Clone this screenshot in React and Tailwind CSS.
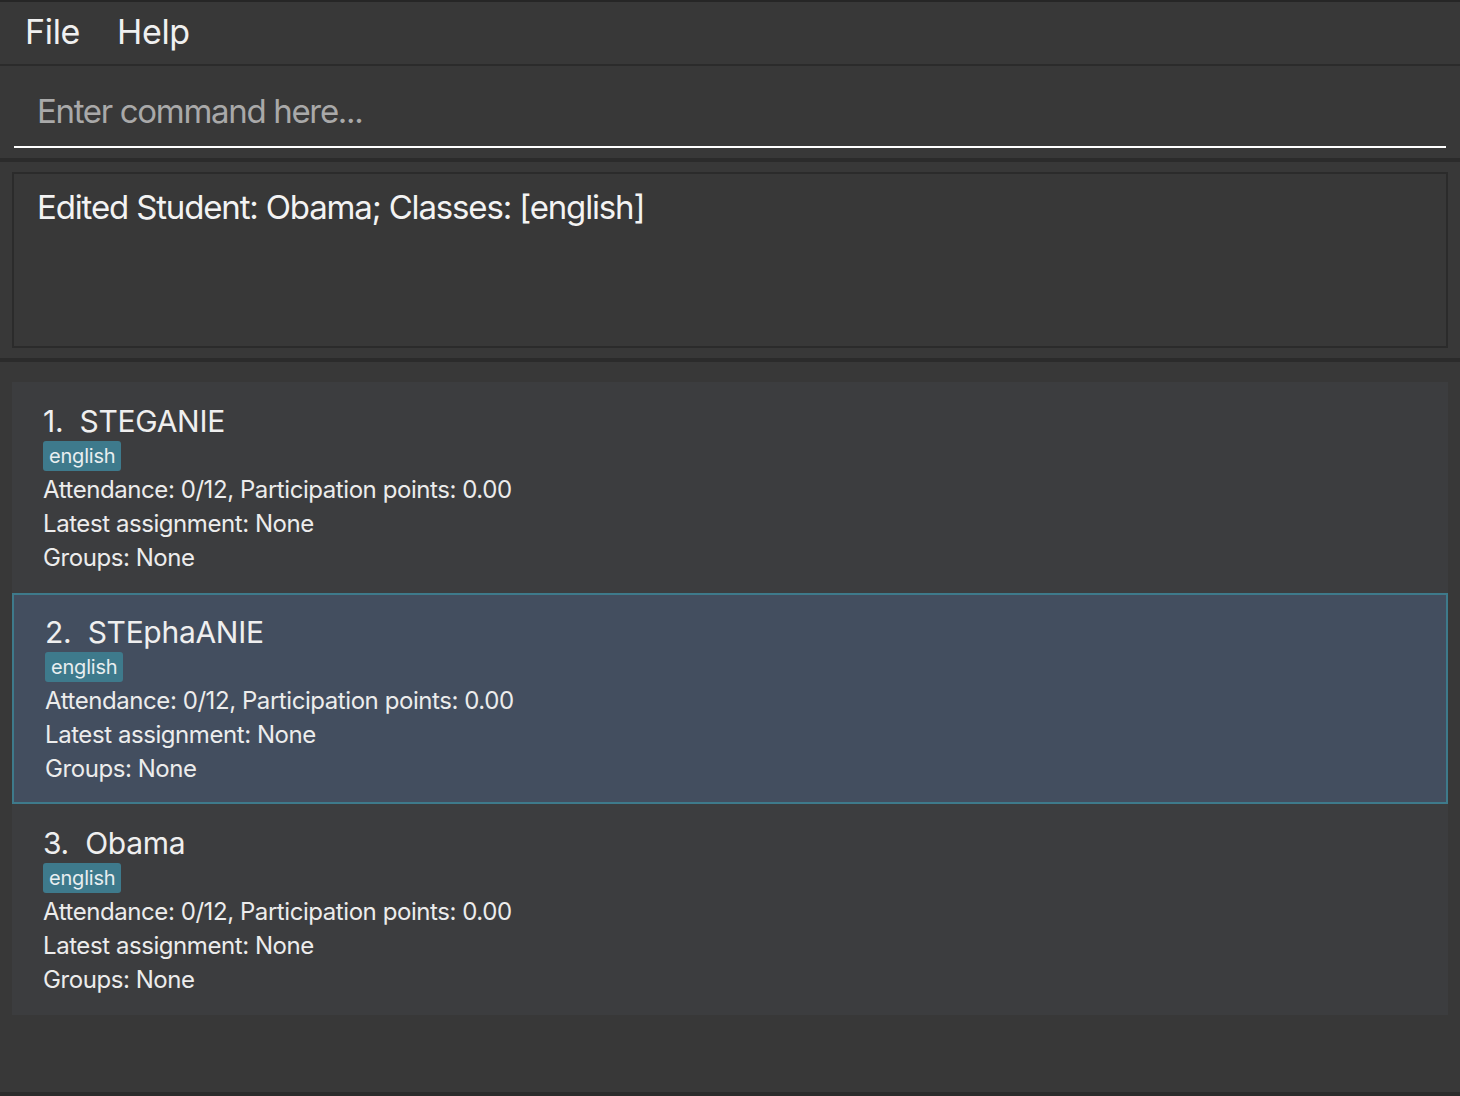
import React from 'react';

const students = [
  { id: 1, name: 'STEGANIE', tag: 'english' },
  { id: 2, name: 'STEphaANIE', tag: 'english', selected: true },
  { id: 3, name: 'Obama', tag: 'english' },
];

const StudentCard = ({ student }) => {
  const box = student.selected
    ? 'bg-[#434e5f] border-2 border-[#3e7a8b] pl-[31px]'
    : 'border-2 border-transparent pl-[29px]';
  return (
    <div className={`h-[211px] pt-[18px] ${box}`}>
      <div className="text-[30px] leading-[38px] text-[#efefef] tracking-[-0.01em]">
        {student.id}.&nbsp; {student.name}
      </div>
      <div className="mt-[1px] mb-[2px] flex">
        <span className="bg-[#3e7a8c] text-[#e8eef0] text-[20px] leading-[30px] px-[6px] rounded-[3px] tracking-[-0.01em]">
          {student.tag}
        </span>
      </div>
      <div className="text-[24px] leading-[34px] text-[#ececec] tracking-[-0.018em]">
        <div>Attendance: 0/12, Participation points: 0.00</div>
        <div>Latest assignment: None</div>
        <div>Groups: None</div>
      </div>
    </div>
  );
};

const App = () => {
  return (
    <div className="h-[1096px] bg-[#383838] flex flex-col font-['Inter',sans-serif] border-t-[2px] border-[#262626] overflow-hidden">
      <div className="h-[62px] flex items-center gap-[37px] pl-[25px] pb-[4px] text-[34px] text-[#f0f0f0] tracking-[-0.01em]">
        <span>File</span>
        <span>Help</span>
      </div>
      <div className="h-[2px] bg-[#2b2b2b]" />
      <div className="h-[92px] px-[14px] pt-[23px]">
        <div className="h-[59px] border-b-[2px] border-white pl-[23px] text-[33px] leading-[44px] text-[#a9a9a9] tracking-[-0.04em]">
          Enter command here...
        </div>
      </div>
      <div className="h-[4px] bg-[#2b2b2b]" />
      <div className="px-[12px] pt-[10px]">
        <div className="h-[176px] border-2 border-[#2b2b2b] pl-[23px] pt-[11px] text-[33px] leading-[44px] text-[#f3f3f3] tracking-[-0.035em]">
          Edited Student: Obama; Classes: [english]
        </div>
      </div>
      <div className="mt-[10px] h-[4px] bg-[#2b2b2b]" />
      <div className="mt-[20px] mx-[12px] bg-[#3c3d3f] flex flex-col">
        {students.map((s) => (
          <StudentCard key={s.id} student={s} />
        ))}
      </div>
      <div className="flex-1" />
      <div className="h-[4px] bg-[#2b2b2b]" />
    </div>
  );
};

export default App;
